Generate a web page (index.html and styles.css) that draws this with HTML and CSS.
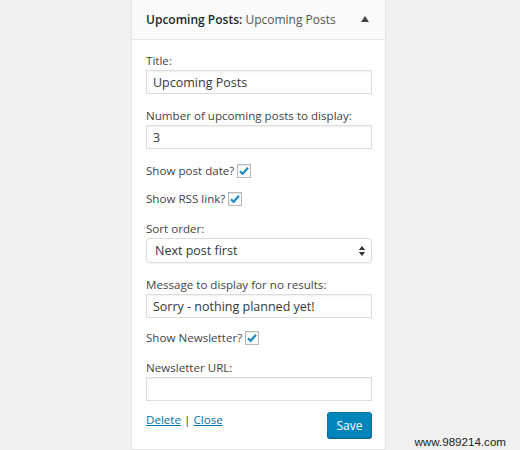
FILE: index.html
```html
<!DOCTYPE html>
<html>
<head>
<meta charset="utf-8">
<link rel="stylesheet" href="styles.css">
</head>
<body>
<div class="page">
  <div class="widget">
    <div class="widget-top">
      <h3 class="widget-title">Upcoming Posts:<span class="in-title"> Upcoming Posts</span></h3>
      <span class="toggle"></span>
    </div>
    <form class="widget-inside">
      <div class="field">
        <label class="lbl">Title:</label>
        <input class="txt" type="text" value="Upcoming Posts">
      </div>
      <div class="field">
        <label class="lbl">Number of upcoming posts to display:</label>
        <input class="txt" type="text" value="3">
      </div>
      <div class="check-row">
        <span>Show post date?</span>
        <span class="cb"><svg viewBox="0 0 14 14" width="14" height="14"><path d="M3 7.2 L5.6 9.8 L11 3.8" fill="none" stroke="#1e8cbe" stroke-width="2.2"/></svg></span>
      </div>
      <div class="check-row tight">
        <span>Show RSS link?</span>
        <span class="cb"><svg viewBox="0 0 14 14" width="14" height="14"><path d="M3 7.2 L5.6 9.8 L11 3.8" fill="none" stroke="#1e8cbe" stroke-width="2.2"/></svg></span>
      </div>
      <div class="field">
        <label class="lbl">Sort order:</label>
        <div class="select">
          <span>Next post first</span>
          <svg class="arrows" viewBox="0 0 8 12" width="8" height="12"><path d="M4 1 L7.2 5 L0.8 5 Z M4 11 L7.2 7 L0.8 7 Z" fill="#333"/></svg>
        </div>
      </div>
      <div class="field before-check">
        <label class="lbl">Message to display for no results:</label>
        <input class="txt" type="text" value="Sorry - nothing planned yet!">
      </div>
      <div class="check-row tight">
        <span>Show Newsletter?</span>
        <span class="cb"><svg viewBox="0 0 14 14" width="14" height="14"><path d="M3 7.2 L5.6 9.8 L11 3.8" fill="none" stroke="#1e8cbe" stroke-width="2.2"/></svg></span>
      </div>
      <div class="field">
        <label class="lbl">Newsletter URL:</label>
        <input class="txt" type="text" value="">
      </div>
      <div class="actions">
        <div class="links"><a href="#">Delete</a> | <a href="#">Close</a></div>
        <button class="save" type="button">Save</button>
      </div>
    </form>
  </div>
  <div class="watermark">www.989214.com</div>
</div>
</body>
</html>
```

FILE: styles.css
```css
html, body {
  margin: 0;
  padding: 0;
  background: #f1f1f1;
}
.page {
  position: relative;
  width: 520px;
  height: 450px;
  overflow: hidden;
  font-family: "Open Sans", "Liberation Sans", sans-serif;
  color: #444;
}
.widget {
  margin-left: 131px;
  width: 253px;
  border: 1px solid #e5e5e5;
  border-top: none;
  background: #fff;
  box-shadow: 0 1px 1px rgba(0,0,0,0.04);
}
.widget-top {
  height: 39px;
  background: #fafafa;
  border-bottom: 1px solid #e5e5e5;
  display: flex;
  align-items: center;
  justify-content: space-between;
  padding: 0 16px 0 14px;
}
.widget-title {
  margin: 0;
  font-size: 12px;
  font-weight: 600;
  color: #23282d;
}
.in-title {
  font-weight: 400;
  color: #555;
}
.toggle {
  width: 0;
  height: 0;
  border-left: 4px solid transparent;
  border-right: 4px solid transparent;
  border-bottom: 6px solid #444;
  margin-top: -1px;
}
.widget-inside {
  padding: 13px 13px 11px 14px;
  display: flex;
  flex-direction: column;
  font-size: 11.6px;
}
.field {
  display: flex;
  flex-direction: column;
  margin-bottom: 14px;
}
.field.before-check {
  margin-bottom: 12px;
}
.lbl {
  line-height: 16px;
  height: 16px;
  margin-bottom: 1px;
  white-space: nowrap;
}
.txt {
  box-sizing: border-box;
  width: 226px;
  height: 24px;
  margin: 0;
  border: 1px solid #ddd;
  box-shadow: inset 0 1px 2px rgba(0,0,0,0.07);
  padding: 0 6px;
  font-family: "Open Sans", "Liberation Sans", sans-serif;
  font-size: 12.5px;
  color: #32373c;
  background: #fff;
  outline: none;
}
.check-row {
  display: flex;
  align-items: center;
  height: 16px;
  line-height: 16px;
  margin-bottom: 12px;
  white-space: nowrap;
}
.check-row.tight {
  margin-bottom: 14px;
}
.cb {
  box-sizing: border-box;
  width: 14px;
  height: 14px;
  margin-left: 3px;
  border: 1px solid #b4b9be;
  background: #fff;
  box-shadow: inset 0 1px 2px rgba(0,0,0,0.1);
  display: flex;
  align-items: center;
  justify-content: center;
}
.cb svg {
  display: block;
  margin: -1px;
  flex: none;
}
.select {
  box-sizing: border-box;
  width: 226px;
  height: 25px;
  border: 1px solid #ddd;
  border-radius: 4px;
  box-shadow: 0 1px 2px rgba(0,0,0,0.06);
  display: flex;
  align-items: center;
  justify-content: space-between;
  padding: 0 5px 0 8px;
  font-size: 12.5px;
  color: #32373c;
}
.arrows { display: block; }
.actions {
  display: flex;
  justify-content: space-between;
  align-items: flex-start;
  margin-top: -3px;
}
.links {
  line-height: 16px;
  color: #444;
}
.links a {
  color: #0073aa;
  text-decoration: underline;
}
.save {
  box-sizing: border-box;
  width: 45px;
  height: 26px;
  margin: 0;
  padding: 0;
  background: #0085ba;
  border: 1px solid #0073aa;
  border-radius: 3px;
  box-shadow: 0 1px 0 #006799;
  color: #fff;
  font-family: "Open Sans", "Liberation Sans", sans-serif;
  font-size: 12px;
}
.watermark {
  position: absolute;
  right: 14px;
  bottom: 2px;
  font-family: "Liberation Sans", Arial, sans-serif;
  font-size: 11.6px;
  color: #222;
}
```
